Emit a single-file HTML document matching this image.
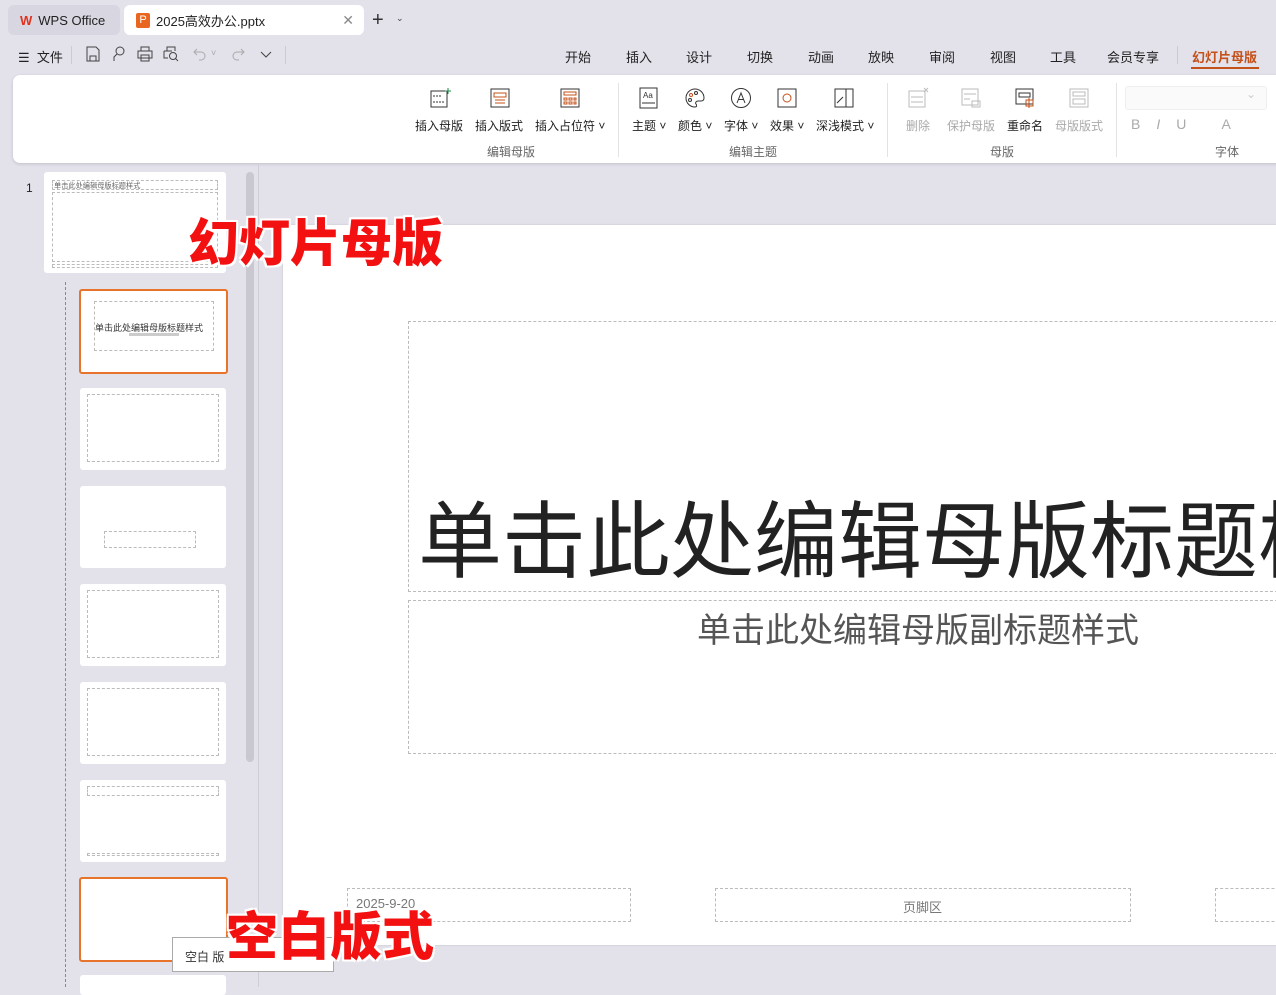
<!DOCTYPE html>
<html><head><meta charset="utf-8"><style>
*{margin:0;padding:0;box-sizing:border-box}
body{width:1276px;height:987px;overflow:hidden;background:#e3e1ea;font-family:"Liberation Sans","Noto Sans CJK SC",sans-serif;font-size:12px;color:#222;position:relative}
.a{position:absolute}
.tab{position:absolute;top:5px;height:30px;border-radius:6px;display:flex;align-items:center;font-size:13px}
.menu span{position:absolute;top:47px;font-size:13px;color:#222}
.rib{position:absolute;left:13px;top:75px;width:1280px;height:88px;background:#fff;border-radius:7px;box-shadow:0 1px 3px rgba(0,0,0,.15)}
.btn{position:absolute;top:42px;font-size:12px;white-space:nowrap}
.grp{position:absolute;top:68px;font-size:12px;color:#666}
.sep{position:absolute;top:8px;width:1px;height:74px;background:#e3e3e3}
.ic{position:absolute;top:12px;width:22px;height:22px}
.th{position:absolute;background:#fff;border-radius:3px}
.dl{border:1px dashed #bbb;position:absolute}
.dim{color:#aaa}
.q{position:absolute;top:46px;width:16px;height:16px}
.big{position:absolute;font-weight:900;color:#f21010;text-shadow:0 0 3px #fff,0 0 3px #fff,2px 2px 0 #fff,-2px -2px 0 #fff,2px -2px 0 #fff,-2px 2px 0 #fff}
</style></head><body>
<div class="tab" style="left:8px;width:112px;background:#d8d6e0"><span style="color:#e0321e;font-weight:bold;margin:0 6px 0 12px">W</span>WPS Office</div>
<div class="tab" style="left:124px;width:240px;background:#fff"><span style="display:inline-block;width:14px;height:15px;background:#e8661f;color:#fff;font-size:11px;text-align:center;line-height:15px;margin:0 6px 0 12px;border-radius:2px">P</span>2025高效办公.pptx<span style="position:absolute;right:10px;color:#888;font-size:14px">✕</span></div>
<div class="a" style="left:372px;top:9px;font-size:20px;color:#333">+</div><div class="a" style="left:396px;top:13px;font-size:9px;color:#444">⌄</div>
<div class="a" style="left:18px;top:47px;font-size:13px">☰&nbsp; 文件</div>
<div class="a" style="left:71px;top:46px;width:1px;height:18px;background:#ccc"></div>
<svg class="q" style="left:85px" viewBox="0 0 16 16" fill="none" stroke="#444"><path d="M2 1h9l3 3v11H2z M5 10h6v5H5z"/></svg>
<svg class="q" style="left:111px" viewBox="0 0 16 16" fill="none" stroke="#444"><circle cx="9" cy="5" r="4"/><path d="M6 8l-3 3v4"/></svg>
<svg class="q" style="left:137px" viewBox="0 0 16 16" fill="none" stroke="#444"><path d="M4 5V1h8v4M1 5h14v7H1zM4 9h8v6H4z"/></svg>
<svg class="q" style="left:163px" viewBox="0 0 16 16" fill="none" stroke="#444"><path d="M4 5V1h8v4M1 5h8M1 5v7h4"/><circle cx="10" cy="10" r="3.5"/><path d="M12.5 12.5L15 15"/></svg>
<svg class="q" style="left:192px" viewBox="0 0 16 16" fill="none" stroke="#aaa"><path d="M5 3L2 6l3 3M2 6h7a4 4 0 0 1 0 8H7"/></svg>
<div class="a" style="left:211px;top:48px;font-size:9px;color:#aaa">˅</div>
<svg class="q" style="left:230px" viewBox="0 0 16 16" fill="none" stroke="#aaa"><path d="M11 3l3 3-3 3M14 6H7a4 4 0 0 0 0 8h2"/></svg>
<svg class="q" style="left:258px" viewBox="0 0 16 16" fill="none" stroke="#444"><path d="M3 6l5 5 5-5"/></svg>
<div class="a" style="left:285px;top:46px;width:1px;height:18px;background:#ccc"></div>
<div class="menu"><span style="left:565px">开始</span><span style="left:626px">插入</span><span style="left:686px">设计</span><span style="left:747px">切换</span><span style="left:808px">动画</span><span style="left:868px">放映</span><span style="left:929px">审阅</span><span style="left:990px">视图</span><span style="left:1050px">工具</span><span style="left:1107px">会员专享</span><span style="left:1192px;color:#c4501a;font-weight:bold">幻灯片母版</span></div>
<div class="a" style="left:1177px;top:46px;width:1px;height:18px;background:#ccc"></div>
<div class="a" style="left:1191px;top:67px;width:68px;height:2px;background:#c4501a"></div>
<div class="rib">
<svg class="ic" style="left:417px" viewBox="0 0 22 22" fill="none" stroke="#333"><rect x="1" y="4" width="16" height="16"/><path d="M3 9h8M3 15h12" stroke-dasharray="2 1"/><path d="M18 1v6M15 4h6" stroke="#1a8a4a"/></svg>
<svg class="ic" style="left:476px" viewBox="0 0 22 22" fill="none" stroke="#333"><rect x="2" y="2" width="18" height="18"/><path d="M5 6h12v4H5z M6 13h10M6 16h10" stroke="#c4501a"/></svg>
<svg class="ic" style="left:546px" viewBox="0 0 22 22" fill="none" stroke="#333"><rect x="2" y="2" width="18" height="18"/><path d="M5 5h12v3H5zM5 11h3v2H5zM10 11h3v2h-3zM15 11h2v2h-2zM5 15h3v2H5zM10 15h3v2h-3zM15 15h2v2h-2z" stroke="#c4501a"/></svg>
<div class="btn" style="left:402px">插入母版</div><div class="btn" style="left:462px">插入版式</div><div class="btn" style="left:522px">插入占位符 ˅</div>
<div class="grp" style="left:474px">编辑母版</div>
<div class="sep" style="left:605px"></div>
<svg class="ic" style="left:625px" viewBox="0 0 22 22" fill="none" stroke="#333"><rect x="2" y="1" width="17" height="20"/><text x="5" y="11" font-size="8" fill="#333" stroke="none">Aa</text><path d="M4 16h13"/></svg>
<svg class="ic" style="left:671px" viewBox="0 0 22 22" fill="none" stroke="#333"><path d="M11 2a9 9 0 1 0 0 18c2 0 2-2 1-3s0-3 2-3h3c2 0 3-1 3-3 0-5-4-9-9-9z"/><circle cx="7" cy="8" r="1.5" stroke="#c4501a"/><circle cx="12" cy="6" r="1.5"/><circle cx="6" cy="13" r="1.5"/></svg>
<svg class="ic" style="left:717px" viewBox="0 0 22 22" fill="none" stroke="#333"><circle cx="11" cy="11" r="9.5"/><path d="M7 16l4-10 4 10M8.5 12.5h5"/></svg>
<svg class="ic" style="left:763px" viewBox="0 0 22 22" fill="none" stroke="#333"><rect x="2" y="2" width="18" height="18"/><circle cx="11" cy="11" r="4" stroke="#c4501a"/></svg>
<svg class="ic" style="left:820px" viewBox="0 0 22 22" fill="none" stroke="#333"><rect x="2" y="2" width="18" height="18"/><path d="M13 2v18M4 16l6-6"/></svg>
<div class="btn" style="left:619px">主题 ˅</div><div class="btn" style="left:665px">颜色 ˅</div><div class="btn" style="left:711px">字体 ˅</div><div class="btn" style="left:757px">效果 ˅</div><div class="btn" style="left:803px">深浅模式 ˅</div>
<div class="grp" style="left:716px">编辑主题</div>
<div class="sep" style="left:874px"></div>
<svg class="ic" style="left:894px" viewBox="0 0 22 22" fill="none" stroke="#bbb"><rect x="2" y="4" width="16" height="16"/><path d="M4 10h12M4 15h12M17 1l4 4M21 1l-4 4"/></svg>
<svg class="ic" style="left:947px" viewBox="0 0 22 22" fill="none" stroke="#bbb"><rect x="2" y="2" width="16" height="16"/><path d="M4 7h12M4 12h6"/><rect x="12" y="14" width="8" height="6"/></svg>
<svg class="ic" style="left:1001px" viewBox="0 0 22 22" fill="none" stroke="#333"><rect x="2" y="2" width="17" height="15"/><path d="M5 6h11v4H5z"/><path d="M12 13h7v6h-7zM15 11v10" stroke="#c4501a"/></svg>
<svg class="ic" style="left:1055px" viewBox="0 0 22 22" fill="none" stroke="#bbb"><rect x="2" y="2" width="18" height="18"/><path d="M5 5h12v4H5zM5 12h12v5H5z"/></svg>
<div class="btn dim" style="left:893px">删除</div><div class="btn dim" style="left:934px">保护母版</div><div class="btn" style="left:994px">重命名</div><div class="btn dim" style="left:1042px">母版版式</div>
<div class="grp" style="left:977px">母版</div>
<div class="sep" style="left:1103px"></div>
<div class="a" style="left:1112px;top:11px;width:142px;height:24px;border:1px solid #eee;border-radius:3px;background:#fafafa;color:#ccc;text-align:right;padding-right:10px">⌄</div>
<div class="a dim" style="left:1118px;top:41px;font-size:14px;letter-spacing:16px">B<i>I</i>U A</div>
<div class="grp" style="left:1202px">字体</div>
</div>
<div class="a" style="left:258px;top:165px;width:1px;height:822px;background:#cfcdd6"></div>
<div class="a" style="left:246px;top:172px;width:8px;height:590px;background:#c9c7cf;border-radius:4px"></div>
<div class="a" style="left:26px;top:181px;font-size:12px">1</div>
<div class="th" style="left:44px;top:172px;width:182px;height:101px">
 <div class="dl" style="left:8px;top:8px;width:166px;height:10px"></div>
 <div class="a" style="left:10px;top:8px;font-size:8px;color:#666;transform:scale(.9);transform-origin:left">单击此处编辑母版标题样式</div>
 <div class="dl" style="left:8px;top:20px;width:166px;height:70px"></div>
 <div class="dl" style="left:8px;top:92px;width:166px;height:4px"></div>
</div>
<div class="a" style="left:65px;top:282px;height:705px;border-left:1px dashed #888"></div>
<div class="th" style="left:79px;top:289px;width:149px;height:85px;border:2px solid #e8732a">
 <div class="dl" style="left:13px;top:10px;width:120px;height:50px"></div>
 <div class="a" style="left:14px;top:30px;font-size:9px;color:#333;white-space:nowrap">单击此处编辑母版标题样式</div>
 <div class="a" style="left:48px;top:42px;width:50px;height:3px;background:#ccc"></div>
</div>
<div class="th" style="left:80px;top:388px;width:146px;height:82px"><div class="dl" style="left:7px;top:6px;width:132px;height:68px"></div></div>
<div class="th" style="left:80px;top:486px;width:146px;height:82px"><div class="dl" style="left:24px;top:45px;width:92px;height:17px"></div></div>
<div class="th" style="left:80px;top:584px;width:146px;height:82px"><div class="dl" style="left:7px;top:6px;width:132px;height:68px"></div></div>
<div class="th" style="left:80px;top:682px;width:146px;height:82px"><div class="dl" style="left:7px;top:6px;width:132px;height:68px"></div></div>
<div class="th" style="left:80px;top:780px;width:146px;height:82px"><div class="dl" style="left:7px;top:6px;width:132px;height:10px"></div><div class="dl" style="left:7px;top:73px;width:132px;height:3px"></div></div>
<div class="th" style="left:79px;top:877px;width:149px;height:85px;border:2px solid #e8732a"></div>
<div class="th" style="left:80px;top:975px;width:146px;height:20px"></div>
<div class="a" style="left:283px;top:225px;width:1000px;height:720px;background:#fff;box-shadow:0 0 2px rgba(0,0,0,.15)"></div>
<div class="dl" style="left:408px;top:321px;width:880px;height:271px"></div>
<div class="a" style="left:418px;top:481px;font-size:84px;color:#222;white-space:nowrap;font-family:'Noto Sans CJK SC',sans-serif;line-height:110px">单击此处编辑母版标题样式</div>
<div class="dl" style="left:408px;top:600px;width:880px;height:154px"></div>
<div class="a" style="left:697px;top:603px;font-size:34px;color:#555;white-space:nowrap;font-family:'Noto Sans CJK SC',sans-serif">单击此处编辑母版副标题样式</div>
<div class="dl" style="left:347px;top:888px;width:284px;height:34px"></div>
<div class="a" style="left:356px;top:896px;font-size:13px;color:#777">2025-9-20</div>
<div class="dl" style="left:715px;top:888px;width:416px;height:34px"></div>
<div class="a" style="left:903px;top:897px;font-size:13px;color:#777">页脚区</div>
<div class="dl" style="left:1215px;top:888px;width:80px;height:34px"></div>
<div class="a" style="left:172px;top:937px;width:162px;height:35px;background:#fff;border:1px solid #aaa;padding:10px 12px;font-size:12px;color:#333">空白 版</div>
<div class="big" style="left:188px;top:206px;font-size:51px;line-height:66px;font-family:'Noto Sans CJK SC',sans-serif">幻灯片母版</div>
<div class="big" style="left:226px;top:900px;font-size:52px;line-height:66px;font-family:'Noto Sans CJK SC',sans-serif">空白版式</div>
</body></html>
